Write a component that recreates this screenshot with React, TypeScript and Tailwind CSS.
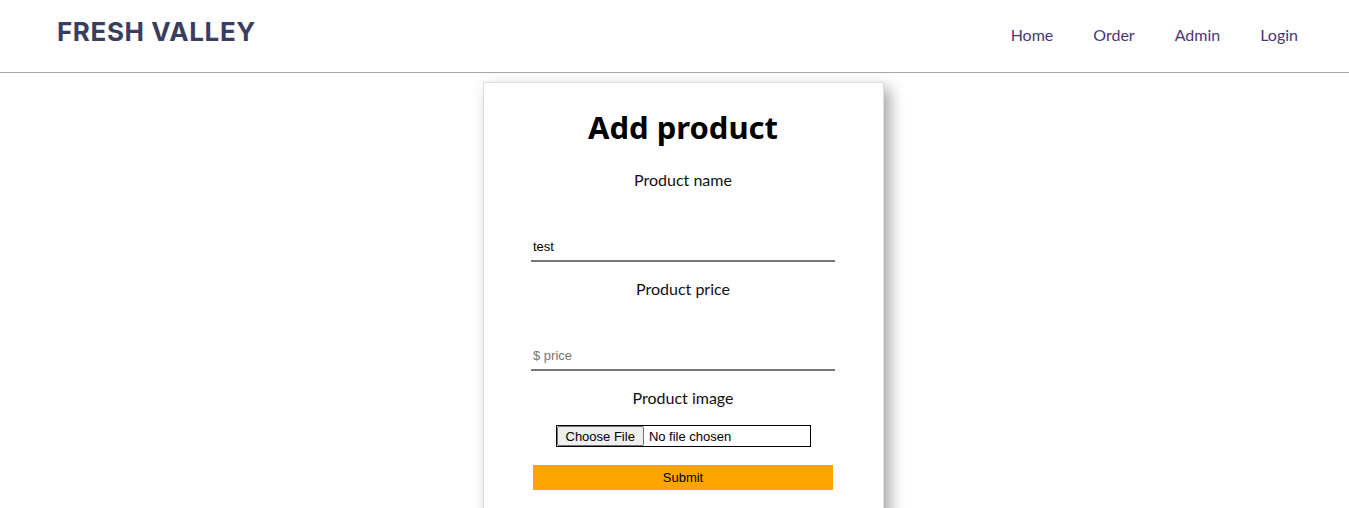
export default function App() {
  return (
    <div className="min-h-screen bg-white font-['Lato',sans-serif]">
      <header className="h-[73px] border-b border-[#a6a6a6] flex items-center justify-between pl-[57px] pr-[51px]">
        <h1 className="font-['Inter',sans-serif] font-bold text-[26px] text-[#3b3d5c] tracking-[0.6px] -mt-[10px]">
          FRESH VALLEY
        </h1>
        <nav className="flex gap-[40px] text-[16px] text-[#4b3574] -mt-[2px]">
          <a href="#">Home</a>
          <a href="#">Order</a>
          <a href="#">Admin</a>
          <a href="#">Login</a>
        </nav>
      </header>

      <div className="flex justify-center pl-[17px] pt-[9px]">
        <form className="w-[401px] bg-white border border-[#dedede] shadow-[6px_6px_14px_rgba(0,0,0,0.35)] flex flex-col items-center pb-[40px]">
          <h2 className="font-['Noto_Sans',sans-serif] text-[31px] font-bold leading-[37px] mt-[26px] text-black">
            Add product
          </h2>

          <label className="mt-[22px] leading-[24px] text-[16px] text-[#111]">Product name</label>
          <input
            defaultValue="test"
            className="mt-[40px] w-[304px] h-[30px] border-b-2 border-[#777] outline-none px-[2px] text-[13px] font-['Liberation_Sans',sans-serif]"
          />

          <label className="mt-[15px] leading-[24px] text-[16px] text-[#111]">Product price</label>
          <input
            placeholder="$ price"
            className="mt-[40px] w-[304px] h-[30px] border-b-2 border-[#777] outline-none px-[2px] text-[13px] font-['Liberation_Sans',sans-serif] placeholder:text-[#757575]"
          />

          <label className="mt-[15px] leading-[24px] text-[16px] text-[#111]">Product image</label>
          <input
            type="file"
            className="mt-[15px] w-[255px] h-[22px] border border-black text-[13px] font-['Liberation_Sans',sans-serif] file:bg-[#efefef] file:border file:border-[#767676] file:rounded-[2px] file:px-[8px] file:h-full file:mr-[5px] file:text-black"
          />

          <button
            type="button"
            className="mt-[18px] w-[300px] h-[25px] bg-[#ffa500] text-[13px] text-black font-['Liberation_Sans',sans-serif]"
          >
            Submit
          </button>
        </form>
      </div>
    </div>
  );
}
